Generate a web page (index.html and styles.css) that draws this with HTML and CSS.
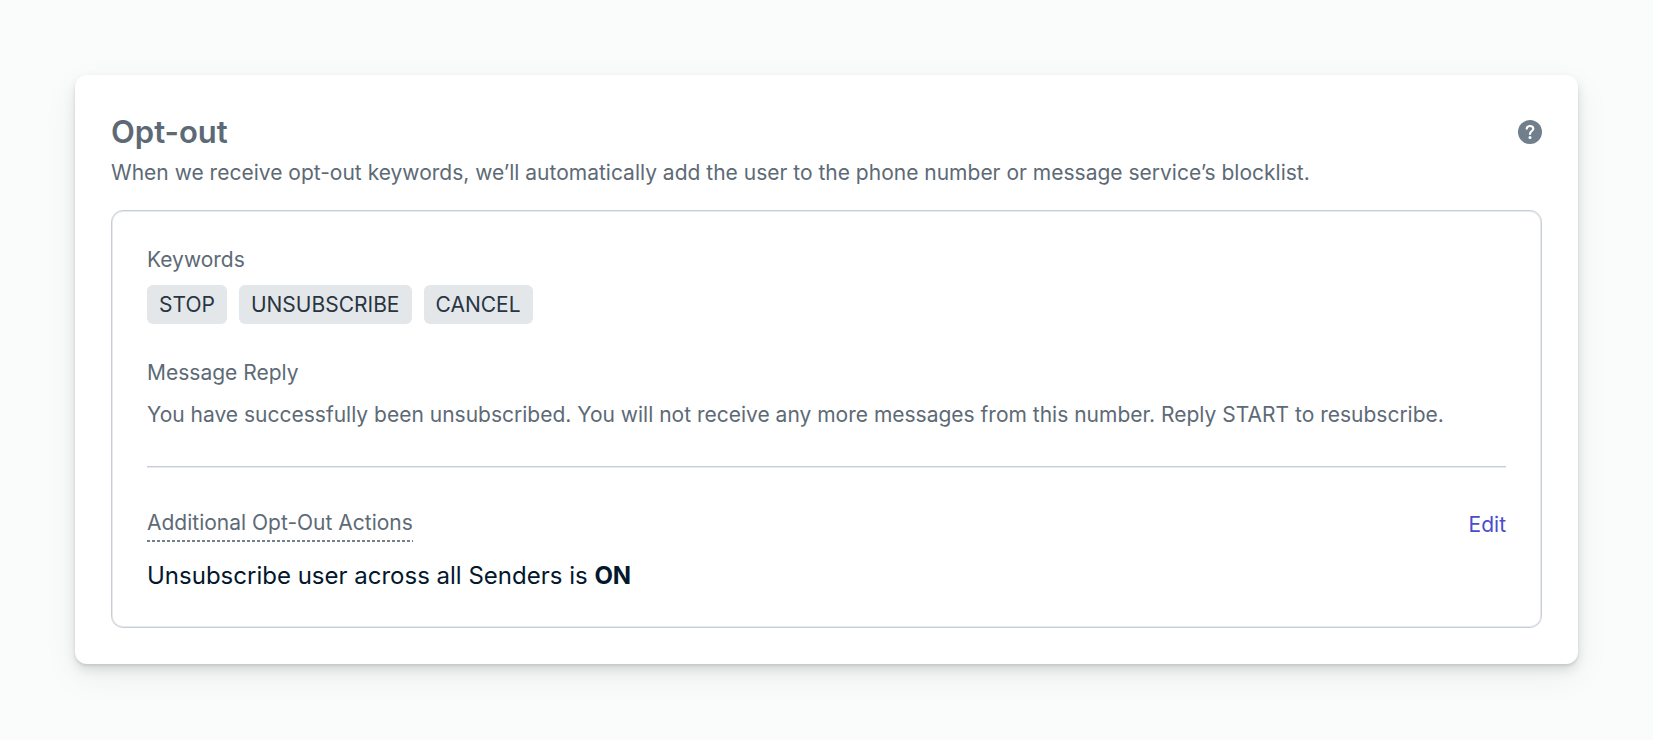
FILE: index.html
```html
<!DOCTYPE html>
<html lang="en">
<head>
<meta charset="utf-8">
<title>Opt-out</title>
<link rel="stylesheet" href="styles.css">
</head>
<body>
<main class="card">
  <header class="card-header">
    <h1 class="title">Opt-out</h1>
    <button class="help" type="button" aria-label="Help">
      <svg viewBox="0 0 24 24" width="24" height="24" aria-hidden="true">
        <circle cx="12" cy="12" r="12" fill="#717e8b"/>
        <path d="M8.7 8.7C8.9 7 10.2 6 12 6s3.3 1.1 3.3 2.7c0 2.3-3.3 2.4-3.3 5.2" fill="none" stroke="#fff" stroke-width="2.2" stroke-linecap="round" stroke-linejoin="round"/>
        <circle cx="12" cy="17.5" r="1.5" fill="#fff"/>
      </svg>
    </button>
  </header>
  <p class="description">When we receive opt-out keywords, we’ll automatically add the user to the phone number or message service’s blocklist.</p>
  <section class="panel">
    <h2 class="label">Keywords</h2>
    <ul class="tags">
      <li class="tag">STOP</li>
      <li class="tag">UNSUBSCRIBE</li>
      <li class="tag">CANCEL</li>
    </ul>
    <h2 class="label label-reply">Message Reply</h2>
    <p class="reply">You have successfully been unsubscribed. You will not receive any more messages from this number. Reply START to resubscribe.</p>
    <hr class="divider">
    <div class="actions">
      <h2 class="label label-dashed">Additional Opt-Out Actions</h2>
      <button class="edit" type="button">Edit</button>
    </div>
    <p class="status">Unsubscribe user across all Senders is <strong>ON</strong></p>
  </section>
</main>
</body>
</html>
```
FILE: styles.css
```css
* {
  box-sizing: border-box;
}

body {
  margin: 0;
  padding: 75px;
  background: #fafcfb;
  color: #5d6a76;
  font-family: Inter, "Liberation Sans", sans-serif;
  font-size: 21px;
  line-height: 32px;
}

h1, h2, p, ul {
  margin: 0;
  padding: 0;
  font-weight: 400;
}

button {
  padding: 0;
  border: 0;
  background: none;
  font: inherit;
  cursor: pointer;
}

.card {
  padding: 36px;
  border-radius: 12px;
  background: #fff;
  box-shadow: 0 2px 3px rgba(0, 0, 0, 0.1), 0 6px 12px rgba(0, 0, 0, 0.1), 0 12px 36px rgba(0, 0, 0, 0.06);
}

.card-header {
  display: flex;
  align-items: center;
  justify-content: space-between;
}

.title {
  font-size: 31px;
  font-weight: 600;
  line-height: 42px;
}

.help {
  display: flex;
}

.description {
  margin-top: 4px;
}

.panel {
  margin-top: 21px;
  padding: 33px 35px 35px;
  border: 1px solid #c8ced5;
  border-radius: 12px;
  box-shadow: inset 0 0 0 1px #e6e9ed;
}

.label {
  font-size: 21px;
}

.tags {
  display: flex;
  flex-wrap: wrap;
  gap: 12px;
  margin-top: 9px;
  list-style: none;
}

.tag {
  padding: 4px 12px;
  border-radius: 6px;
  background: #e4e7ea;
  color: #293541;
  line-height: 31px;
}

.label-reply {
  margin-top: 33px;
}

.reply {
  margin-top: 10px;
}

.divider {
  height: 2px;
  margin: 35px 0 39px;
  border: 0;
  border-top: 1px solid #c8ced5;
  background: #e6e9ed;
}

.actions {
  display: flex;
  align-items: center;
  justify-content: space-between;
}

.label-dashed {
  padding-bottom: 3px;
  background: repeating-linear-gradient(to right, #75808d 0 3px, transparent 3px 5px) left bottom / 100% 2px no-repeat;
}

.edit {
  color: #4a4bd0;
}

.status {
  margin-top: 18px;
  color: #03182d;
  font-size: 24px;
}

.status strong {
  font-weight: 700;
}
```
